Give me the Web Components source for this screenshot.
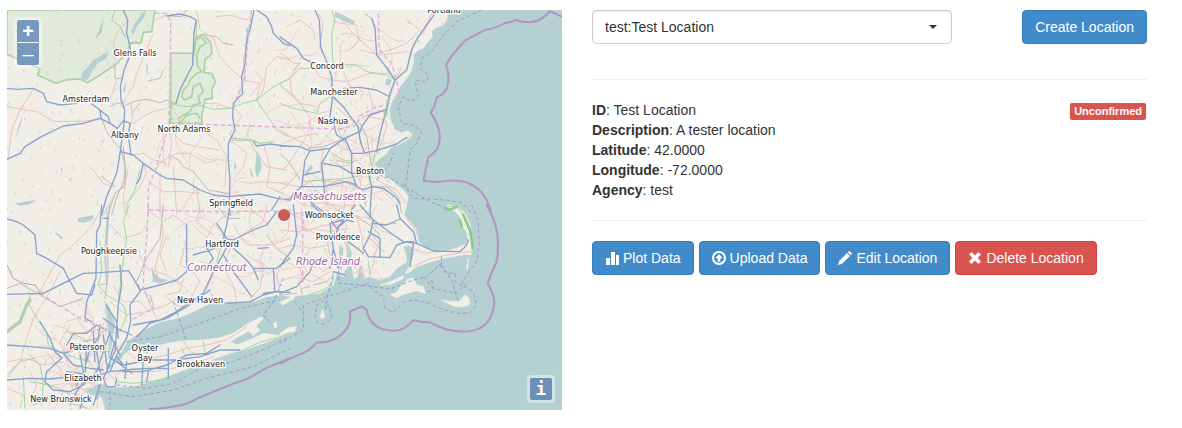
<!DOCTYPE html>
<html lang="en">
<head>
<meta charset="utf-8">
<title>Locations</title>
<style>
  body { margin: 0; background: #fff; color: #333; font: 14px/20px "Liberation Sans", Arial, sans-serif; }
</style>
</head>
<body>
<location-page>
  <location-map slot="map"></location-map>
  <location-toolbar slot="panel"></location-toolbar>
  <location-details slot="panel" status="Unconfirmed">
    <detail-row name="ID">Test Location</detail-row>
    <detail-row name="Description">A tester location</detail-row>
    <detail-row name="Latitude">42.0000</detail-row>
    <detail-row name="Longitude">-72.0000</detail-row>
    <detail-row name="Agency">test</detail-row>
  </location-details>
  <location-actions slot="panel">
    <action-button icon="stats">Plot Data</action-button>
    <action-button icon="upload">Upload Data</action-button>
    <action-button icon="pencil">Edit Location</action-button>
    <action-button icon="remove" kind="danger">Delete Location</action-button>
  </location-actions>
</location-page>

<template id="map-template">
<style>
  :host { display: block; position: relative; height: 400px; overflow: hidden; background: #b5d0d0; }
  svg.map { display: block; width: 100%; height: 100%; }
  .map path { fill: none; stroke-linejoin: round; stroke-linecap: round; }
  .map .land { fill: #f1eee8; stroke: #f1eee8; stroke-width: 2; }
  .map .lake { fill: #b5d0d0; }
  .map .park { fill: #dfe8d8; fill-opacity: .8; stroke: #a9d3a5; stroke-width: 5; }
  .map .b { stroke: #89a2cb; stroke-width: 4; }
  .map .g { stroke: #a0d8a0; stroke-width: 3; }
  .map .p { stroke: #eac3c0; stroke-width: 3; }
  .map .k { stroke: #bebbb7; stroke-width: 3; }
  .map .s { stroke: #d9b0d9; stroke-width: 4; stroke-dasharray: 14 8; stroke-linecap: butt; }
  .map .w { stroke: #a49ac2; stroke-width: 3; stroke-dasharray: 11 8; stroke-linecap: butt; }
  .map .f { stroke: #849ae0; stroke-width: 3; stroke-dasharray: 11 7; stroke-linecap: butt; }
  .map .sea { stroke: #b195c5; stroke-width: 6; }
  text { font: 9px "DejaVu Sans Condensed", "DejaVu Sans", sans-serif; text-anchor: middle; fill: #222; stroke: #fff; stroke-opacity: .85; stroke-width: 3px; stroke-linejoin: round; paint-order: stroke; }
  text.state { font-size: 11px; font-style: oblique; fill: #9b619e; }
  .ctl { position: absolute; display: grid; gap: 1px; padding: 3px; border-radius: 4px; background: rgba(255,255,255,.4); }
  .zoom { left: 7px; top: 7px; }
  .info { right: 7px; bottom: 7px; }
  .ctl button { width: 22px; height: 22px; padding: 0; border: 0; border-radius: 2px; background: #7998be; color: #fff; font: bold 20px/22px "Liberation Sans", sans-serif; }
  .zoom button:first-child { border-radius: 2px 2px 0 0; }
  .zoom button:last-child { border-radius: 0 0 2px 2px; font-weight: normal; }
  .info button { background: #6b8fb6; font-family: "DejaVu Sans Mono", monospace; font-size: 18px; }
</style>
<svg class="map" viewBox="7 10 555 400" preserveAspectRatio="xMidYMid slice" role="img" aria-label="Map of southern New England">
 <defs><clipPath id="ground"><path id="shape" d="M21 30H1345L1340 60 1330 75 1305 85 1295 95 1297 110 1280 130 1270 145 1255 150 1240 165 1240 190 1232 215 1220 235 1200 260 1190 280 1175 305 1168 330 1172 360 1185 390 1205 398 1225 392 1237 405 1220 420 1205 430 1175 440 1160 460 1140 475 1125 490 1130 505 1150 525 1175 540 1190 555 1210 570 1225 590 1220 615 1212 645 1235 670 1250 690 1255 725 1280 745 1310 758 1340 753 1370 745 1395 733 1405 720 1400 695 1385 675 1380 650 1365 633 1335 625 1340 616 1370 620 1395 640 1410 675 1418 715 1416 765 1400 763 1370 768 1340 773 1310 780 1280 790 1250 800 1230 815 1215 822 1225 805 1235 775 1240 745 1225 735 1210 740 1218 765 1220 785 1190 805 1170 830 1140 840 1110 830 1090 835 1080 785 1072 830 1062 835 1055 795 1035 810 1030 830 1010 820 1000 855 960 880 910 885 870 889 840 885 800 890 760 905 700 905 640 905 600 925 570 940 530 955 480 965 440 985 400 1010 380 1025 365 1055 345 1075 330 1095 330 1135 315 1150 285 1155 260 1185 290 1175 305 1195 315 1230H21Z"/></clipPath></defs>
 <g transform="scale(.333333)">
  <path class="land" d="M21 30H1345L1340 60 1330 75 1305 85 1295 95 1297 110 1280 130 1270 145 1255 150 1240 165 1240 190 1232 215 1220 235 1200 260 1190 280 1175 305 1168 330 1172 360 1185 390 1205 398 1225 392 1237 405 1220 420 1205 430 1175 440 1160 460 1140 475 1125 490 1130 505 1150 525 1175 540 1190 555 1210 570 1225 590 1220 615 1212 645 1235 670 1250 690 1255 725 1280 745 1310 758 1340 753 1370 745 1395 733 1405 720 1400 695 1385 675 1380 650 1365 633 1335 625 1340 616 1370 620 1395 640 1410 675 1418 715 1416 765 1400 763 1370 768 1340 773 1310 780 1280 790 1250 800 1230 815 1215 822 1225 805 1235 775 1240 745 1225 735 1210 740 1218 765 1220 785 1190 805 1170 830 1140 840 1110 830 1090 835 1080 785 1072 830 1062 835 1055 795 1035 810 1030 830 1010 820 1000 855 960 880 910 885 870 889 840 885 800 890 760 905 700 905 640 905 600 925 570 940 530 955 480 965 440 985 400 1010 380 1025 365 1055 345 1075 330 1095 330 1135 315 1150 285 1155 260 1185 290 1175 305 1195 315 1230H21Z"/>
  <g transform="translate(0 615)">
   <path class="land" d="M318 500L340 480 362 465 375 445 400 430 440 448 480 420 540 408 600 406 660 398 700 385 740 358 785 335 790 342 765 365 735 385 715 395 690 410 710 420 760 400 790 385 840 392 870 375V383L800 412 740 432 700 442 640 462 570 488 500 515 450 530 400 545 330 546 308 530Z"/>
   <path class="land" d="M740 370L765 360 780 375 760 392Z M815 360L830 350 830 370Z"/>
   <path class="lake" d="M318 290L330 310 345 360 335 420 322 470 328 400 320 350Z M255 550L300 548 310 575 270 570Z M320 0L326 60 318 150 324 240 318 240 312 150 318 60Z"/>
  </g>
  <g transform="translate(840 615)">
   <path class="land" d="M302 240L330 230 370 212 368 222 335 238Z M332 268L350 262 365 240 385 222 400 220 410 240 430 245 436 265 410 258 370 268 350 278Z M485 285L510 290 540 288 555 270 568 280 568 300 545 306 520 303Z M120 335L128 312 135 335 126 342Z M0 385L25 368 50 365 45 378 5 392Z M560 190L565 160 563 192Z"/>
   <path class="land" d="M0 292L45 270 40 282 8 300Z"/>
   <path class="lake" d="M178 120L190 130 185 200 175 180Z M200 110L215 140 210 210 200 180Z"/>
  </g>
  <path class="park" d="M21 30H465L460 60 455 95 430 97 424 128 390 130 385 150 352 190 290 232 262 248 240 237 200 239 168 250 113 225 120 206 60 180 21 163Z M512 159L582 160 590 110 610 103 632 128 636 160 615 180 612 218 635 220 646 245 635 270 638 295 615 298 605 350 606 370 512 370Z"/>
  <path class="park" d="M588 118L605 112 620 130 600 140 590 165 592 195 605 215 590 220 570 240 565 255 550 270 545 290 555 300 575 290 580 260 600 250 610 275 595 290 600 310 580 315 570 335 550 345 535 355 540 370 560 345 590 340 600 355" style="fill:none"/>
  <path class="lake" d="M425 40L440 30 430 55 410 80 400 105 393 95 405 70Z M325 155L320 175 295 188 275 215 262 240 245 240 245 218 262 205 280 180Z M380 240L375 280 368 270Z M770 450L780 470 785 500 772 535 765 510 768 480Z M750 500L762 535 752 525Z M45 610L75 605 110 600 90 612 60 618Z M55 380L68 345 62 375 45 420Z M1005 35L1030 45 1065 65 1060 75 1030 62 1005 50Z M1160 235L1175 240 1170 255 1155 255Z M232 655L280 645 280 658 255 668 235 665Z M165 695L190 715 185 718 168 703Z M182 500L188 505 186 522Z M440 185L445 200 438 230Z M455 810L480 835 505 840 480 850 460 845Z M915 515L935 495 940 505 918 525Z M305 70L312 50 306 95 285 120Z M738 80L748 90 740 125Z M704 480L710 500 702 512Z"/>
  <g id="texture" clip-path="url(#ground)"></g>
  <!-- north-west -->
  <g>
   <path class="k" d="M345 30L335 60 360 80 375 110M385 130L410 125M345 190V235L365 235M370 320L400 305 440 297 480 308 500 300 530 310M330 320L350 310 370 308M303 350L320 395 345 430 365 450 375 500 372 560 345 580 325 640M420 310L395 340M445 243L480 235 490 210M505 465L535 480 550 500 580 515 600 540 625 570 680 580M560 30L545 50 510 48M370 440L378 530 350 590 335 645M690 415L760 420 780 430M620 105L650 110 670 130 700 135"/>
   <path class="p" d="M100 268L80 300 60 330 35 390 25 470M21 320L110 335 165 365 260 363 300 355M465 60L500 45M365 30L385 60 350 100 340 130 345 180M460 100L430 170 410 220 400 260 380 290 360 320M393 310L398 360 390 380M400 370L430 350 460 335 500 325M395 465L430 460 460 480 500 490M390 600L420 560 440 520 430 490M465 510L490 480 530 460 570 460 620 490 650 480M450 550L490 575 550 575 600 580M480 520V640M520 500L530 640M590 30L600 90 640 115 660 170 700 215 725 235M650 50L690 45 740 60 760 40M745 110L730 180 735 240 705 310M700 320L725 350 690 400 700 430M730 240L780 250 770 300 790 270 800 200 830 170 870 180M610 310L650 310 690 325M520 400L550 430 590 440 660 450M620 400L650 420 680 470 675 560M705 430L740 460 730 500 700 540M750 370L740 410 770 460 800 500 860 510M590 570L600 640M640 590L650 640M720 545L750 550 790 545 860 550M270 500L310 550 340 560M310 645L340 590M350 240L330 300M375 640L370 590 385 500M700 570L740 600 760 640M790 430L810 500 800 560 850 580M760 210L790 240 750 290M505 370L515 430 505 500"/>
   <path class="g" d="M590 60L588 110 580 160 578 190M505 308L550 320 600 317 640 328 690 325 730 310 770 300 820 260 870 235M770 300L800 345 830 390 865 410M700 420L720 423 745 420 780 430 820 425M420 510L405 570 382 610 380 640M305 530L345 560M520 312L505 340 520 360"/>
   <path class="b" d="M370 30L383 60 380 100 388 130 393 160 372 210 361 260 363 300 374 330 372 370 367 410 360 460 350 520 320 590 305 645M21 265L50 268 100 265 130 280 140 305 180 315 230 310M275 312L300 330 325 350 330 370M21 478L60 460 75 440 120 412 190 378 250 370 300 355 330 370 352 385 370 362 390 370 385 410 390 440 393 465M300 330L303 355M362 455L400 465 430 490 480 525 500 535 550 540 600 570 640 585 680 590 740 585 780 582 830 595 870 600M430 490L420 535 410 550M500 48L540 42 570 50 588 60 582 100 578 195 560 230 540 270 528 310M762 30L750 90 740 120 735 190 725 230 728 280 700 310 698 350 705 390 685 430 685 480 690 540 688 590 690 645M770 30L800 50 815 80 820 100 850 130 870 137M760 425L770 438 810 432 870 440M840 590L815 630"/>
   <path class="s" d="M465 40L500 40 512 65 508 370 490 430 470 500 445 560V645M508 370L870 382M755 30L745 100 735 230 700 320M445 630L645 635 870 633"/>
  </g>
  <!-- north-east -->
  <g transform="translate(840 0)">
   <path class="k" d="M0 255L30 280 60 310 80 340M60 190L40 210M255 40L275 55 285 80M85 445L130 440 170 425 200 410M170 480L210 490 230 480M0 460L30 490 60 540M130 560L180 540 230 560M240 370L260 410 275 500M275 560L320 560 355 590 365 640M320 200L340 230"/>
   <path class="p" d="M20 80L60 60 100 90 105 120M115 40L130 70 120 130 125 160M185 60L210 90 240 120 285 160M240 150L300 165 380 155M160 60L180 70 230 75 235 120 210 150M380 60L420 90 380 130 330 150 295 160M60 190L30 230 35 280 60 310 110 320M90 190L120 230 155 240M190 215L210 260 250 275 240 300M155 240L200 245 270 220 330 220M80 370L120 340 155 330M170 320L200 350 230 370 245 430M265 270L280 320 270 350 310 360M310 330L320 380 300 440 280 480M0 390L50 420 90 440M10 430L60 410 110 400M90 350L85 400 60 440 20 500 0 510M130 450L120 500 140 560 145 640M150 480L180 500 210 495M0 550L60 560 100 540 150 545M190 420L210 460 250 500 240 560M100 570L140 590 190 580 240 580 260 620M270 510L310 530 330 550M290 540L350 570 380 610M0 600L40 590 60 610 100 620M200 560L190 640M455 40L435 90 400 130 385 180M365 200L340 260 325 310 320 350M0 160L20 170 40 190 60 190M190 420L175 390 180 370 195 395M250 350L300 330M60 510L20 560 0 570"/>
   <path class="g" d="M155 30L165 60 155 100 158 180 160 190 230 195 260 215 320 225 345 240M0 250L30 235 60 205 95 205M0 310L40 325 110 340 120 310 150 290M155 460L190 480 220 485M65 545L130 540 200 535 265 520M275 510L290 490 310 475M270 540L285 455M320 300V350"/>
   <path class="b" d="M105 30L118 60 122 140 140 185 155 230 158 290 150 350 162 375 170 405 195 420M0 110L20 125 50 145 70 175 100 190M275 55L285 85 290 165 310 190 345 240M465 40L440 75 415 110 395 150 380 210 345 240 330 280 320 325 300 400 290 455M190 265L240 262 290 270 325 288M160 290L190 320 215 355 235 380 240 420 252 455M315 330L270 345 245 380 240 395 200 412 150 445 90 453M0 438L60 440 90 453 75 480 65 560M150 447L125 490 130 540 135 600M195 415L215 460 245 460 290 452 350 432 380 412M215 460L215 520 230 560 250 570 275 560 310 565 345 590 360 610M65 560L70 525 120 515M65 560L130 560 200 545 230 555M130 490L180 500 215 520 265 520 275 560 270 645M65 560L40 580 30 600M90 605L130 635"/>
   <path class="s" d="M295 40L298 150 335 190 350 240 360 300 280 325 235 350 235 375 180 387 0 382M0 640H60"/>
   <path class="w" d="M605 30L530 65 490 105 455 155 425 175 420 205 445 225 440 245 405 240 415 290 395 305 370 290 355 320 365 370 400 375 425 395 410 430 390 450 380 540 375 560 400 595 500 600 550 610 575 640"/>
   <path class="f" d="M280 520L330 535 400 575 450 605 500 625M290 540L330 490 340 460"/>
   <path class="sea" d="M810 33L845 50M810 33Q780 70 740 66Q720 66 710 59Q690 68 675 69Q650 84 615 90L555 121 515 168 498 195Q512 230 500 265Q495 280 470 293Q465 320 452 338Q495 400 470 450L445 472 430 542Q450 544 475 546Q610 520 635 645"/>
  </g>
  <!-- south-west -->
  <g transform="translate(0 615)">
   <path class="k" d="M330 0L320 90 325 200 315 280M490 0L480 100 440 160 410 230M650 0L680 40 720 40M21 250L60 235 120 270 180 305 250 280M250 410L290 400 320 370M800 90L830 130 870 160M100 600L150 580 200 590"/>
   <path class="p" d="M330 60L370 100 420 85 440 60M480 0L490 90 465 190 480 235M560 60L520 30 490 50 450 20M500 90L480 150 500 200M560 100L540 180 580 200 600 230 570 280M580 60L620 100 640 60 690 20M430 250L450 300 470 340M550 220L540 260 500 270M700 60L740 120 820 120 870 100M690 130L670 190 700 240 710 290M740 150L790 180 780 250 750 280M600 0L590 50 640 90M800 0L790 50 740 80 700 110M300 20L270 70 220 120 180 150 120 260M180 200L150 260 125 300 100 340 80 400 60 470 21 520M21 470L80 460 130 480 190 470M200 350L230 340 260 380 310 370 290 420M210 360L180 410 200 460 240 500M140 440L170 480 200 520 260 560M180 510L220 545 260 530M21 550L70 570 60 610M90 500L110 540 90 600M170 600L190 560 240 570M280 600L260 560 300 510 310 470M320 500L340 520 360 500 400 490 460 500 520 490 600 470 640 455M380 440L420 470 500 450 560 430 620 420 680 405 740 365M550 410L570 440 600 450M330 290L380 330 440 320 500 300 560 260M340 240L370 290 420 290 450 320M640 210L620 250 650 290M860 150L830 210 840 270M490 270L530 300 560 310M420 150L440 190 500 210 540 240"/>
   <path class="g" d="M388 0L370 50 380 100 365 200 355 290M300 110L305 200 295 240 320 270 370 300 380 330 360 380M130 260L90 270 88 300 110 340 140 380 145 420 180 440 230 460 270 470M90 450L120 480 130 530 125 600M21 510L60 470 100 460M70 520L75 610M220 600L200 560 150 540 90 530M300 240L320 235M545 430L560 460M610 410L615 445M730 435L780 412 840 395 870 383M350 530L400 535 450 530 500 520M200 380L250 400 290 440 330 440M650 170L665 120M450 270L460 300M130 570L200 590 260 610"/>
   <path class="g" style="stroke:#b5ceae;stroke-width:10" d="M21 380L60 350 80 300 90 285"/>
   <path class="b" d="M21 42L50 50 70 60 105 90 110 145 140 160 190 190 200 210 230 265M305 0L300 60 290 80 288 220 260 290 255 340 275 350M21 268L130 265 200 230 250 205 300 203 385 197 400 220 420 255 480 240 530 225 560 200 560 60M310 40H325M230 265L275 270 285 240M415 240L420 260 390 300 392 350 380 400 350 450 330 500M360 180L365 240 355 300 350 370 345 440 320 490M318 300L350 350 355 400M200 420L220 385 260 385 290 360 310 370M310 340L350 370 395 390M21 420L90 425 150 430 190 445 240 430 290 440M21 525L90 520 150 522 220 515 290 512 330 500 380 495 440 490 500 490M120 350L150 400 165 440 185 460M185 460L140 500 135 530 160 555 210 560 250 540 290 500 310 440 330 380M190 445L220 480 270 490 310 495M260 420L255 510M290 440L300 500M330 480L310 520 320 545 345 545 350 520M210 600L230 560 260 520M250 590L240 610M350 455L370 480 450 465 530 465 600 455 660 435 720 435M370 500L430 500 500 480 560 450 620 445 660 420M400 360L480 345 530 320 570 290 610 265 640 200 690 110M410 395L450 355 500 340 560 305 630 255M680 295L750 290 790 270 830 260 870 262M690 0L680 60 670 100 700 105 760 75 800 60 830 20M700 130L740 165 760 190 830 190 870 160M820 190L825 260 790 265M670 150L700 200 730 240 755 275M650 55L680 100 645 130 580 150M610 200L640 160 620 130 650 110 700 110M505 430V520M430 460L425 540M300 540L280 600M380 470L375 520M760 190L775 225M775 130L805 128M445 500L440 530M330 390L345 420 360 450M300 360L295 400 270 430 260 470M240 450L250 500 230 540M280 380L285 470M310 390L320 480M345 410L330 460 370 480M200 500L240 505 290 530M350 470L395 505"/>
   <path class="s" d="M445 0L440 100 432 180 430 250 460 310 395 345M120 265L240 340 330 380M645 0L640 20"/>
   <path class="s" style="stroke:#bba0b9;stroke-width:3;stroke-dasharray:none" d="M21 180L40 220 70 235 105 240 125 270"/>
   <path class="w" d="M380 410L480 395 600 355 720 310 840 285M350 540L440 550 520 535 600 490 700 470 800 430 870 395M300 560L400 575 520 555 620 520 760 485 870 430M330 555V615"/>
   <path class="f" d="M520 290L540 350 560 410M850 220L820 290 790 330 830 375M300 520L290 590"/>
   <path class="sea" d="M450 612Q500 610 540 601Q570 595 590 581L690 540 745 520 800 488 870 460"/>
  </g>
  <!-- south-east -->
  <g transform="translate(840 615)">
   <path class="k" d="M220 30L270 60 300 90M270 100L310 140M100 240L140 230 160 210M0 270L50 265"/>
   <path class="p" d="M30 10L25 80 0 110M60 20L80 80 130 60 190 60M50 60L140 100 150 150M0 75L50 80 100 70 150 80 210 70M0 130L40 120 90 130 150 120M60 190L100 170 130 200 160 180M0 160L60 190 70 230M0 230L40 215 100 230 150 200M230 30L245 90 250 150M270 80L300 120 280 150M200 60L190 100 210 160 240 210M380 40L410 80 400 120M390 130L440 145 500 130 560 115M400 185L440 165 500 150 570 140M90 130L70 170 80 200M20 20L60 40M150 0L200 30 270 40 290 0"/>
   <path class="g" d="M65 265V250L90 245M85 270L130 255 155 240 160 200M400 115L398 150 388 185M195 110L225 125M265 170L270 210M300 60L350 55M500 5L530 5 550 30 565 70 578 110 575 160"/>
   <path class="g" style="stroke:#8cca8c;stroke-width:8" d="M493 8L510 15 530 5M540 45L545 65M550 30L572 80 578 130"/>
   <path class="b" d="M40 0L50 90 40 130 0 183M0 265L50 245 90 200 105 160M95 0L130 30 190 45 150 55 155 100 160 130 175 190M225 0L180 60 160 100M240 0L280 45 340 90 370 110 410 115 460 138 540 140 560 120 565 105M350 0L360 40 400 80 410 115M280 45L270 90 250 130 265 155 330 158 350 120 380 110 400 110M265 80L300 100 300 155M280 55L320 60 360 42M200 105L250 145M160 200L195 210M390 185L400 115M155 50L170 70 200 45 220 50M150 190L160 130"/>
   <path class="s" d="M68 20V240M240 160L255 240"/>
   <path class="w" d="M575 0L595 50 598 110 590 170 560 210 545 240 580 260 590 300 570 323 530 325 480 310 440 292 400 285 370 292 340 322 315 310 310 275 285 260 265 235 70 300V375L0 415M105 340L110 300 130 288 150 305 155 340 135 358 115 355ZM430 215L460 250 530 265 560 235M455 225L460 255 440 260M480 180L500 205 525 205 525 230 550 245M45 290L65 320"/>
   <path class="f" d="M175 180V235L240 240 330 252 400 225 440 215 485 175 485 155M485 180L515 225 535 290M160 215L145 260 135 320"/>
   <path class="sea" d="M620 0Q660 70 653 130Q655 150 648 175Q635 200 623 235Q640 265 643 290Q640 355 590 374Q565 382 540 379Q495 378 450 352Q425 353 400 345Q375 378 338 377Q270 375 260 314L246 304 210 319Q213 350 202 368Q170 415 110 412Q90 440 50 452L0 476"/>
  </g>
 </g>
 <g id="labels"></g>
 <circle cx="284" cy="215" r="6" fill="#cb5a5a"/>
</svg>
<div class="ctl zoom"><button type="button" aria-label="Zoom in">+</button><button type="button" aria-label="Zoom out">–</button></div>
<div class="ctl info"><button type="button" aria-label="Attributions">i</button></div>
</template>

<script>
const SVG = 'http://www.w3.org/2000/svg';

class LocationPage extends HTMLElement {
  constructor() {
    super();
    this.attachShadow({ mode: 'open' }).innerHTML = `
      <style>
        :host { display: grid; grid-template-columns: minmax(0, 1fr) minmax(0, 1fr); gap: 30px; align-items: start; padding: 10px 35px 18px 7px; }
      </style>
      <slot name="map"></slot>
      <main><slot name="panel"></slot></main>`;
  }
}

class LocationMap extends HTMLElement {
  constructor() {
    super();
    const root = this.attachShadow({ mode: 'open' });
    root.append(document.getElementById('map-template').content.cloneNode(true));
    const places = [
      ['Glens Falls', 135, 56], ['Amsterdam', 86, 102], ['Albany', 125, 138], ['North Adams', 184, 132],
      ['Springfield', 231, 206], ['Concord', 327, 69], ['Manchester', 334, 95], ['Nashua', 333, 124],
      ['Boston', 370, 174], ['Woonsocket', 329, 218], ['Providence', 338, 240], ['Portland', 444, 13],
      ['Poughkeepsie', 109, 254], ['Hartford', 222, 247], ['New Haven', 200, 303], ['Paterson', 87, 350],
      ['Oyster', 145, 351], ['Bay', 145, 361], ['Brookhaven', 201, 367], ['Elizabeth', 83, 381],
      ['New Brunswick', 61, 402],
      ['Massachusetts', 330, 200, 'state'], ['Connecticut', 217, 271, 'state'], ['Rhode Island', 328, 265, 'state']
    ];
    const labels = root.getElementById('labels');
    for (const [name, x, y, kind] of places) {
      const t = document.createElementNS(SVG, 'text');
      t.setAttribute('x', x);
      t.setAttribute('y', y);
      if (kind) t.setAttribute('class', kind);
      t.textContent = name;
      labels.append(t);
    }
    this.scatter(root.getElementById('texture'));
  }

  // Ponds and local roads, spread over the land from a fixed seed.
  scatter(group) {
    let seed = 17;
    const rnd = () => (seed = seed * 16807 % 2147483647) / 2147483647;
    let ponds = '', lanes = '';
    for (let i = 0; i < 1100; i++) {
      const x = Math.round(21 + rnd() * 1400), y = Math.round(30 + rnd() * 1200);
      ponds += `M${x} ${y}l${Math.round(rnd() * 6 - 3)} ${Math.round(2 + rnd() * 5)}`;
    }
    const web = (n, x0, y0, w, h) => {
      for (let i = 0; i < n; i++) {
        let a = rnd() * 6.28;
        lanes += `M${Math.round(x0 + rnd() * w)} ${Math.round(y0 + rnd() * h)}`;
        for (let k = 0; k < 6; k++) {
          a += rnd() - .5;
          lanes += `l${Math.round(Math.cos(a) * 18)} ${Math.round(Math.sin(a) * 18)}`;
        }
      }
    };
    web(40, 480, 560, 660, 300);
    web(30, 880, 360, 260, 270);
    web(36, 180, 980, 200, 200);
    web(10, 860, 60, 360, 280);
    web(6, 480, 380, 340, 140);
    for (const [d, stroke, width] of [[ponds, '#c3d8d4', 3], [lanes, '#edcecb', 3]]) {
      const p = document.createElementNS(SVG, 'path');
      p.setAttribute('d', d);
      p.setAttribute('stroke', stroke);
      p.setAttribute('stroke-width', width);
      group.append(p);
    }
  }
}

const ICONS = {
  stats: '<path d="M1 7h4v7H1zM6 1h4v13H6zM11 4h3v10h-3z"/>',
  upload: '<path fill-rule="evenodd" d="M7 0a7 7 0 1 0 0 14A7 7 0 1 0 7 0zM7 2a5 5 0 1 1 0 10A5 5 0 1 1 7 2z"/><path d="M7 3L3.200 7.200H5.700V10.700H8.300V7.200H10.800Z"/>',
  pencil: '<path d="M0 14L1.300 9.800 9 2.100 11.900 5 4.200 12.700ZM9.800 1.300L10.800.3Q11.300-.2 11.800.3L13.700 2.200Q14.200 2.700 13.700 3.200L12.700 4.200Z"/>',
  remove: '<path d="M3.600 1L7 4.400 10.400 1 13 3.600 9.600 7 13 10.400 10.400 13 7 9.600 3.600 13 1 10.400 4.400 7 1 3.600Z"/>'
};

class ActionButton extends HTMLElement {
  constructor() {
    super();
    this.attachShadow({ mode: 'open' });
  }
  connectedCallback() {
    const icon = ICONS[this.getAttribute('icon')];
    this.shadowRoot.innerHTML = `
      <style>
        :host { display: inline-block; }
        button { display: flex; align-items: center; gap: 4px; padding: 6px 12px; border: 1px solid #357ebd; border-radius: 4px; background: #428bca; color: #fff; font: inherit; white-space: nowrap; cursor: pointer; }
        :host([kind="danger"]) button { background: #d9534f; border-color: #d43f3a; }
        svg { width: 14px; height: 14px; fill: currentColor; overflow: visible; }
      </style>
      <button type="button">${icon ? `<svg viewBox="0 0 14 14" aria-hidden="true">${icon}</svg>` : ''}<span><slot></slot></span></button>`;
  }
}

class LocationToolbar extends HTMLElement {
  constructor() {
    super();
    this.attachShadow({ mode: 'open' }).innerHTML = `
      <style>
        :host { display: flex; justify-content: space-between; align-items: start; padding-bottom: 35px; border-bottom: 1px solid #eee; }
        .pick { position: relative; width: calc((100% + 30px) * 2 / 3 - 30px); }
        select { appearance: none; display: block; box-sizing: border-box; width: 100%; height: 34px; margin: 0; padding: 6px 32px 6px 12px; border: 1px solid #ccc; border-radius: 4px; background: #fff; box-shadow: inset 0 1px 1px rgba(0,0,0,.075); color: #333; font: inherit; }
        .pick::after { content: ""; position: absolute; right: 15px; top: 15px; border: 4px solid transparent; border-top-color: #333; border-bottom: 0; pointer-events: none; }
      </style>
      <div class="pick"><select aria-label="Location"><option>test:Test Location</option></select></div>
      <action-button>Create Location</action-button>`;
  }
}

class DetailRow extends HTMLElement {
  constructor() {
    super();
    this.attachShadow({ mode: 'open' });
  }
  connectedCallback() {
    this.shadowRoot.innerHTML = `<style>:host { display: block; }</style><b>${this.getAttribute('name')}</b>: <slot></slot>`;
  }
}

class LocationDetails extends HTMLElement {
  constructor() {
    super();
    this.attachShadow({ mode: 'open' });
  }
  connectedCallback() {
    this.shadowRoot.innerHTML = `
      <style>
        :host { display: flex; justify-content: space-between; align-items: start; padding: 20px 0; border-bottom: 1px solid #eee; }
        .status { margin: 3px 1px 0 0; padding: 0 4px; border-radius: 2px; background: #d9534f; color: #fff; font-size: 11px; font-weight: bold; line-height: 17px; }
      </style>
      <div><slot></slot></div>
      <span class="status">${this.getAttribute('status')}</span>`;
  }
}

class LocationActions extends HTMLElement {
  constructor() {
    super();
    this.attachShadow({ mode: 'open' }).innerHTML = `
      <style>:host { display: flex; flex-wrap: wrap; gap: 5px; padding-top: 20px; }</style>
      <slot></slot>`;
  }
}

customElements.define('action-button', ActionButton);
customElements.define('detail-row', DetailRow);
customElements.define('location-map', LocationMap);
customElements.define('location-toolbar', LocationToolbar);
customElements.define('location-details', LocationDetails);
customElements.define('location-actions', LocationActions);
customElements.define('location-page', LocationPage);
</script>
</body>
</html>
